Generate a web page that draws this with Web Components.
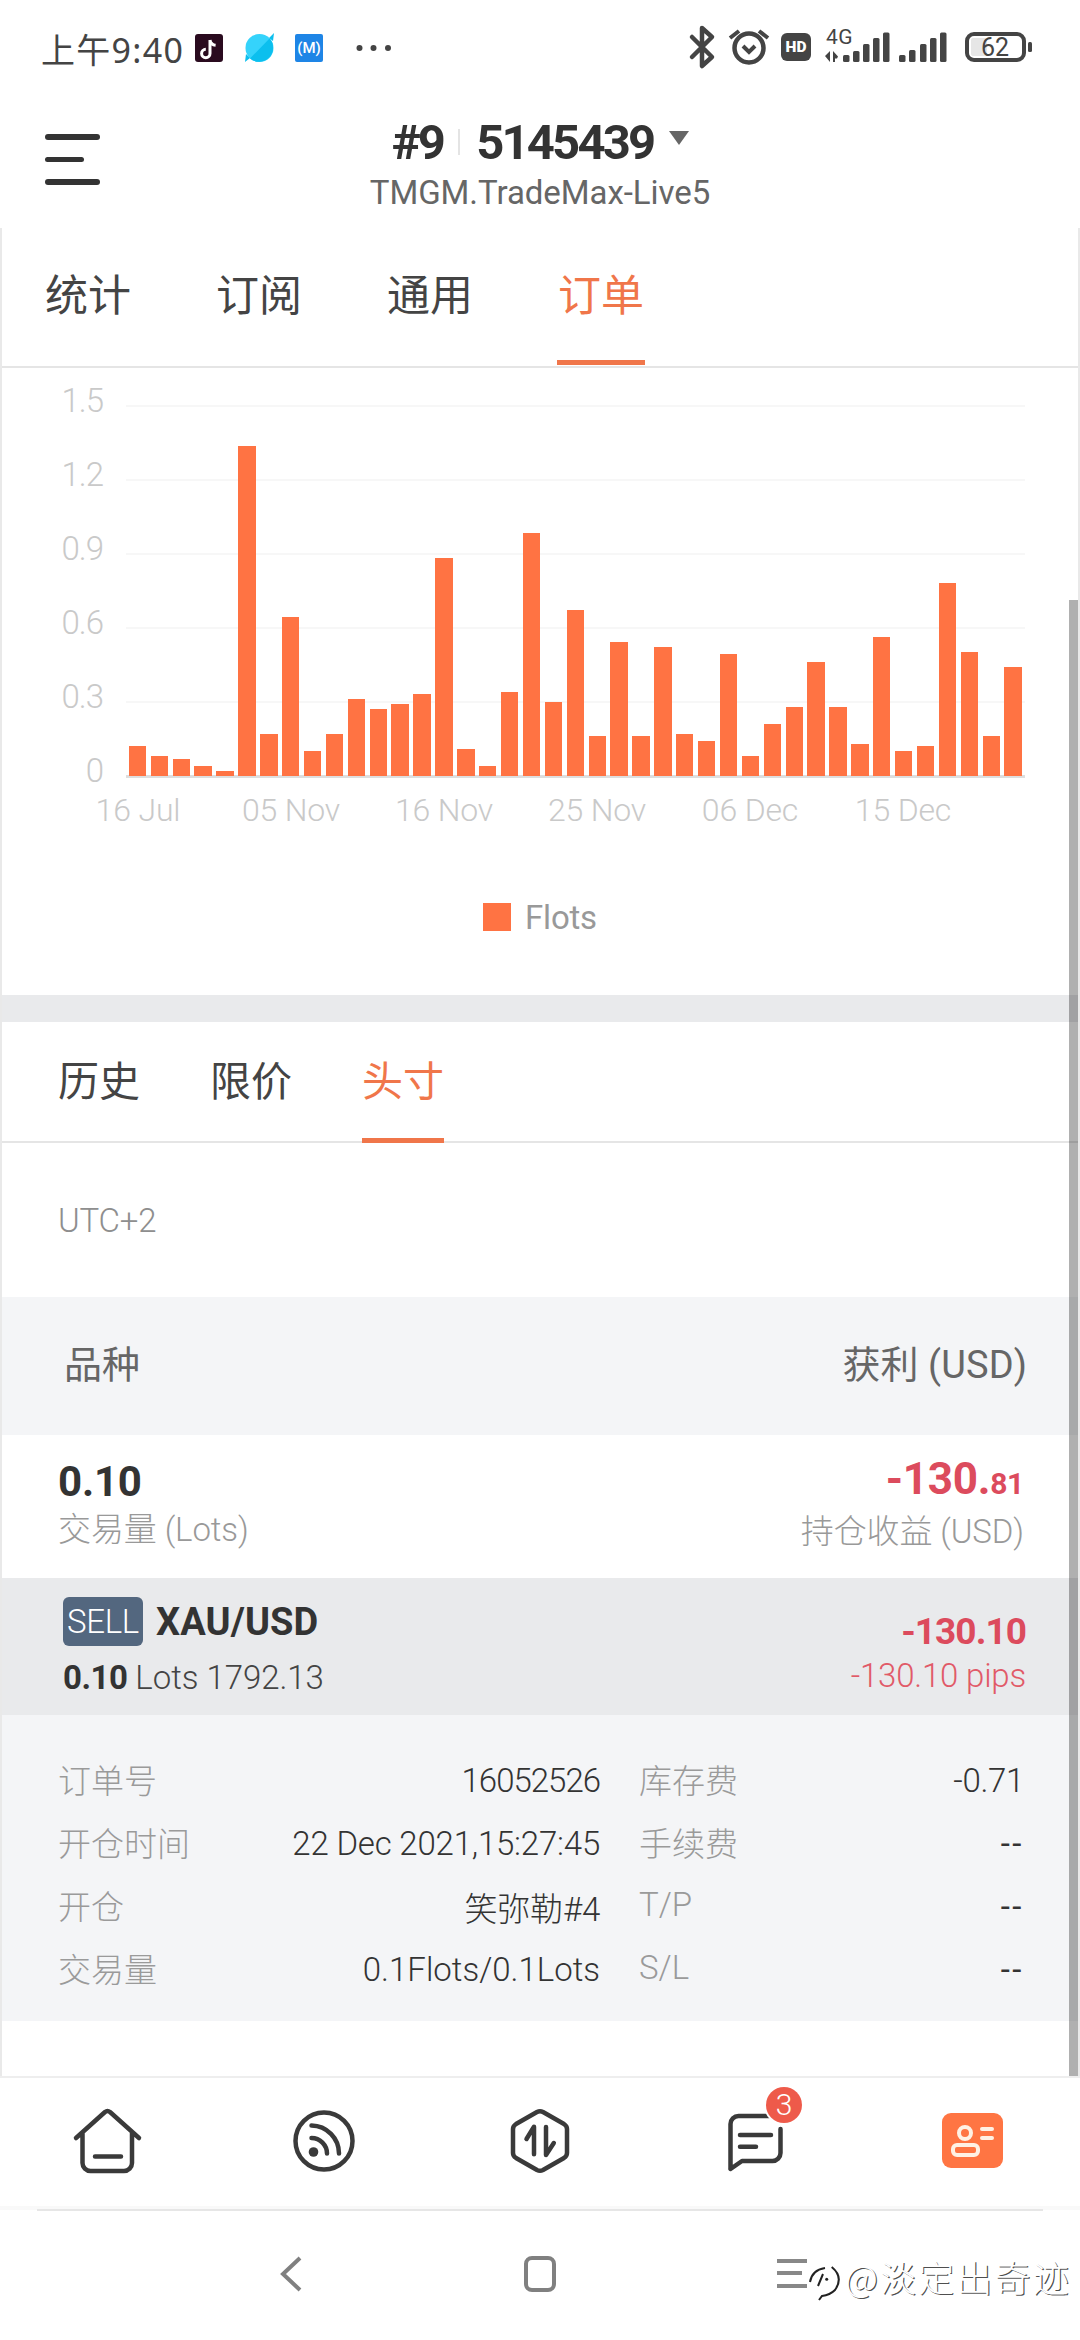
<!DOCTYPE html>
<html lang="zh"><head><meta charset="utf-8"><title>Orders</title>
<style>
html,body{margin:0;padding:0;background:#fff}
body{width:1080px;height:2340px;overflow:hidden;font-family:Roboto,"Noto Sans CJK SC",sans-serif;display:flex;flex-direction:column}
</style></head>
<body>
<status-bar></status-bar>
<app-header></app-header>
<main-panel>
  <tab-bar style="--pt:36px;--fs:43px;--gap:83px;--pl:42px;--pb:40px;--mb:1px;--px:1px">
    <tab-item>统计</tab-item><tab-item>订阅</tab-item><tab-item>通用</tab-item><tab-item active>订单</tab-item>
  </tab-bar>
  <bar-chart data="0.12 .08 .07 .04 .02 1.33 .17 .64 .10 .17 .31 .27 .29 .33 .88 .11 .04 .34 .98 .30 .67 .16 .54 .16 .52 .17 .14 .49 .08 .21 .28 .46 .28 .13 .56 .10 .12 .78 .50 .16 .44"></bar-chart>
  <gray-gap></gray-gap>
  <tab-bar style="--pt:27.500px;--fs:41px;--gap:70px;--pl:56px;--pb:32.500px;--mb:-2px;--px:0px">
    <tab-item>历史</tab-item><tab-item>限价</tab-item><tab-item active>头寸</tab-item>
  </tab-bar>
  <utc-note>UTC+2</utc-note>
  <table-head><span slot="l">品种</span><span slot="r">获利 (USD)</span></table-head>
  <order-summary></order-summary>
  <order-row></order-row>
  <order-details>
    <detail-pair label="订单号" style="--ls:-1px">16052526</detail-pair><detail-pair label="库存费" style="--ls:-.3px">-0.71</detail-pair>
    <detail-pair label="开仓时间">22 Dec 2021,15:27:45</detail-pair><detail-pair label="手续费" style="--ls:2.500px;--vw:400">--</detail-pair>
    <detail-pair label="开仓">笑弥勒#4</detail-pair><detail-pair label="T/P" style="--ls:2.500px;--vw:400">--</detail-pair>
    <detail-pair label="交易量" style="--ls:0px">0.1Flots/0.1Lots</detail-pair><detail-pair label="S/L" style="--ls:2.500px;--vw:400">--</detail-pair>
  </order-details>
</main-panel>
<bottom-nav></bottom-nav>
<system-nav></system-nav>
<script>
function def(name, html, extra){
  customElements.define(name, class extends HTMLElement{
    constructor(){super();this.attachShadow({mode:'open'}).innerHTML=html;}
    connectedCallback(){ if(extra) extra.call(this,this.shadowRoot); }
  });
}
const FONT='font-family:Roboto,"Noto Sans CJK SC",sans-serif;';
def('status-bar',`<style>
:host{display:flex;align-items:center;height:96px;flex:none;padding-left:41px;box-sizing:border-box;${FONT}}
.t{font:400 34px "Noto Sans","Noto Sans CJK SC",sans-serif;color:#444;letter-spacing:1.300px;width:154px;white-space:nowrap}
.l{display:block}.r{display:block;margin-left:auto;margin-right:45px}
</style>
<span class="t">上午9:40</span>
<svg class="l" width="200" height="36" viewBox="195 30 200 36">
  <rect x="195" y="34" width="28" height="28" rx="3" fill="#2a0b1f"/>
  <path d="M210 40v13.5a4.2 4.2 0 1 1-4.2-4.2M210 40c.5 3 2.600 5 5.600 5.300" fill="none" stroke="#fff" stroke-width="3"/>
  <circle cx="259.500" cy="48" r="14" fill="#35d3fb"/>
  <path d="M269 38l5-5-1 8zM250 58l-5 4 1-8zM269.500 38.500A14 14 0 0 1 250 58.500z" fill="#0cbfee"/>
  <rect x="295" y="34" width="28" height="28" rx="2" fill="#1e85e6"/>
  <text x="309" y="53" text-anchor="middle" font-family="Roboto" font-weight="500" font-size="15" fill="#fff">(M)</text>
  <circle cx="359.500" cy="48" r="3" fill="#444"/><circle cx="373.500" cy="48" r="3" fill="#444"/><circle cx="388" cy="48" r="3" fill="#444"/>
</svg>
<svg class="r" width="350" height="46" viewBox="685 26 350 46">
  <path d="M692 38l20 20-10 9V29l10 9-20 20" fill="none" stroke="#444" stroke-width="4.500" stroke-linejoin="round" stroke-linecap="round"/>
  <circle cx="749" cy="49" r="14.500" fill="none" stroke="#444" stroke-width="4.500"/>
  <path d="M743 47l6 6 6-6" fill="none" stroke="#444" stroke-width="4"/>
  <path d="M730 39l9-7M768 39l-9-7" fill="none" stroke="#444" stroke-width="4"/>
  <rect x="781" y="34" width="30" height="28" rx="6" fill="#444"/>
  <text x="796" y="53" text-anchor="middle" font-family="Roboto" font-weight="900" font-size="15.500" fill="#fff">HD</text>
  <text x="826" y="45" font-family="Roboto" font-size="21" fill="#444" letter-spacing=".5">4G</text>
  <path d="M830 52v11l-5-6zM833 63V52l5 5.500-1 2h-2v3.500z" fill="#444"/>
  <g fill="#444">
    <rect x="843" y="56" width="6.500" height="7" rx="1.500"/><rect x="853" y="52" width="6.500" height="11" rx="1.500"/><rect x="863" y="45" width="6.500" height="18" rx="1.500"/><rect x="873" y="39" width="6.500" height="24" rx="1.500"/><rect x="883" y="33.500" width="6.500" height="29.500" rx="1.500"/>
    <rect x="899" y="56" width="6.500" height="7" rx="1.500"/><rect x="909" y="51" width="6.500" height="12" rx="1.500"/><rect x="920" y="45" width="6.500" height="18" rx="1.500"/><rect x="930" y="39" width="6.500" height="24" rx="1.500"/><rect x="940" y="33.500" width="6.500" height="29.500" rx="1.500"/>
  </g>
  <rect x="967" y="35" width="57" height="26" rx="7" fill="none" stroke="#444" stroke-width="4"/>
  <rect x="971" y="39" width="16" height="18" rx="2" fill="#e6e6e6"/>
  <rect x="1028" y="43" width="4" height="10" rx="1.500" fill="#444"/>
  <text x="995" y="57" text-anchor="middle" font-family="Roboto" font-size="25" fill="#444">62</text>
</svg>`);
def('app-header',`<style>
:host{display:grid;grid-template-columns:1fr auto 1fr;height:132px;flex:none;box-sizing:border-box;padding:19px 0 0 0;${FONT}}
.b{margin:19px 0 0 45px;display:flex;flex-direction:column;gap:17px;align-self:start}
.b i{display:block;height:5.500px;width:55px;background:#333;border-radius:3px}
.b i:nth-child(2){width:39px}
.c{display:flex;flex-direction:column;align-items:center}
.a{display:flex;align-items:center;height:54px;font-weight:700;font-size:49px;letter-spacing:-2.800px;color:#333;margin-left:1px}
.s{display:block;width:2px;height:26px;background:#e4e4e4;margin:0 16px 0 15px}
.v{display:block;width:0;height:0;border:10.500px solid transparent;border-top:14px solid #666;border-bottom:0;margin:-8px 0 0 16px}
.n{line-height:47px;font-size:33px;letter-spacing:-.05px;color:#666}
</style>
<div class="b"><i></i><i></i><i></i></div>
<div class="c"><div class="a">#9<span class="s"></span>5145439<span class="v"></span></div><div class="n">TMGM.TradeMax-Live5</div></div>`);
def('main-panel',`<style>
:host{display:block;position:relative;height:1848px;flex:none;box-sizing:border-box;border-left:2px solid #e9e9e9;border-right:2px solid #e9e9e9;overflow:hidden}
.sb{position:absolute;right:-2px;top:372px;bottom:0;width:11px;background:rgba(0,0,0,.31)}
</style><slot></slot><div class="sb"></div>`);
def('tab-bar',`<style>
:host{display:flex;gap:var(--gap);box-sizing:border-box;padding:var(--pt) 0 0 var(--pl);border-bottom:2px solid #e5e5e5;font-size:var(--fs);}
::slotted(tab-item){margin-bottom:var(--mb)}
</style><slot></slot>`);
def('tab-item',`<style>
:host{display:block;line-height:56px;padding:0 var(--px) var(--pb);border-bottom:5px solid transparent;color:#444;font-family:"Noto Sans CJK SC",sans-serif;font-weight:400}
:host([active]){color:#f0764a;border-bottom-color:#f0764a}
</style><slot></slot>`);
def('bar-chart',`<style>
:host{display:block;height:627px;box-sizing:border-box;padding-top:37px;${FONT}color:#c9c9c9;font-weight:300}
.m{display:flex}
.y{width:101px;height:372px;margin-top:-5px;display:flex;flex-direction:column;justify-content:space-between;text-align:right;font-size:33px;letter-spacing:-1px}
.y span{display:block;height:2px;line-height:2px}
.p{position:relative;width:899px;height:373px;margin-left:23px}
.g{height:100%;display:flex;flex-direction:column;justify-content:space-between}
.g i{display:block;height:2px;background:#f7f7f7}
.g i:last-child{height:3px;background:#dedede}
.bars{position:absolute;left:2.800px;right:0;bottom:2px;top:0;display:flex;align-items:flex-end;gap:4.500px}
.bars i{display:block;flex:none;width:17.400px;background:#ff7343}
.x{display:grid;grid-template-columns:repeat(6,153px);margin:12px 0 0 59.500px;line-height:40px;font-size:32px;letter-spacing:-.15px;text-align:center}
.lg{display:flex;justify-content:center;align-items:center;gap:14px;margin-top:67px;height:40px;font-size:33px;letter-spacing:-.2px;color:#999;font-weight:400}
.lg i{display:block;width:28px;height:28px;background:#ff7343}
</style>
<div class="m"><div class="y"><span>1.5</span><span>1.2</span><span>0.9</span><span>0.6</span><span>0.3</span><span>0</span></div>
<div class="p"><div class="g"><i></i><i></i><i></i><i></i><i></i><i></i></div><div class="bars"></div></div></div>
<div class="x"><span>16 Jul</span><span>05 Nov</span><span>16 Nov</span><span>25 Nov</span><span>06 Dec</span><span>15 Dec</span></div>
<div class="lg"><i></i><span>Flots</span></div>`,function(s){
  const box=s.querySelector('.bars');
  if(box.children.length) return;
  this.getAttribute('data').trim().split(/\s+/).forEach(v=>{
    const b=document.createElement('i');b.style.height=(parseFloat(v)*248)+'px';box.appendChild(b);
  });
});
def('gray-gap',`<style>:host{display:block;height:27px;background:#e9eaec}</style>`);
def('utc-note',`<style>:host{display:block;height:154px;box-sizing:border-box;padding:60px 0 0 56px;line-height:36px;font-size:33px;letter-spacing:-.2px;font-weight:300;color:#8e8e8e;${FONT}}</style><slot></slot>`);
def('table-head',`<style>
:host{display:flex;justify-content:space-between;align-items:center;height:138px;box-sizing:border-box;padding:0 51px 10px 62px;background:#f4f5f7;color:#666;font-size:38px;letter-spacing:.1px;${FONT}}
</style><slot name="l"></slot><slot name="r"></slot>`);
def('order-summary',`<style>
:host{display:flex;justify-content:space-between;height:143px;box-sizing:border-box;padding:22.500px 54px 0 56px;${FONT}}
.a{font-weight:700;font-size:42px;line-height:48px;color:#333;letter-spacing:-.2px}
.c{font-size:33px;line-height:44px;color:#999;letter-spacing:-.1px;margin-top:2px;font-weight:300}
.rt{text-align:right}
.red{font-weight:700;font-size:44px;line-height:42px;color:#dc4b5d;letter-spacing:-.3px}
.red small{font-size:30px}
</style>
<div><div class="a">0.10</div><div class="c">交易量 (Lots)</div></div>
<div class="rt"><div class="red">-130.<small>81</small></div><div class="c" style="margin-top:5.500px">持仓收益 (USD)</div></div>`);
def('order-row',`<style>
:host{display:flex;justify-content:space-between;height:137px;box-sizing:border-box;padding:19px 52px 0 61px;background:#e9eaec;${FONT}}
.t{display:flex;align-items:center;height:49px;gap:13px}
.bd{display:block;width:80px;height:49px;line-height:49px;background:#53677f;border-radius:6px;color:#fff;text-align:center;font-size:33px;letter-spacing:-.3px;font-weight:300}
.sy{font-weight:700;font-size:38px;color:#333;letter-spacing:.1px}
.l{margin-top:12px;line-height:40px;font-size:33px;color:#444;letter-spacing:-.05px;font-weight:300}
.l b{font-weight:700;letter-spacing:-.5px;color:#333}
.rt{text-align:right}
.p{font-weight:700;font-size:37px;color:#dc4b5d;line-height:40px;margin-top:15px;letter-spacing:-.95px}
.q{font-size:33px;line-height:40px;margin-top:4px;color:#e15a68;letter-spacing:-.2px;font-weight:300}
</style>
<div><div class="t"><span class="bd">SELL</span><span class="sy">XAU/USD</span></div><div class="l"><b>0.10</b> Lots 1792.13</div></div>
<div class="rt"><div class="p">-130.10</div><div class="q">-130.10 pips</div></div>`);
def('order-details',`<style>
:host{display:grid;grid-template-columns:542px 385px;column-gap:39px;grid-auto-rows:63px;height:306px;box-sizing:border-box;padding:34px 0 0 56px;background:#f4f5f7}
</style><slot></slot>`);
def('detail-pair',`<style>
:host{display:flex;justify-content:space-between;align-items:center;font-size:33px;font-weight:300;${FONT}}
.k{color:#9a9a9a;margin-bottom:4px}
.v{color:#333;letter-spacing:var(--ls,-.2px);font-weight:var(--vw,300)}
</style><span class="k"></span><span class="v"><slot></slot></span>`,function(s){s.querySelector('.k').textContent=this.getAttribute('label');});
const P='fill="none" stroke="#3a3a3a" stroke-width="4.500" stroke-linecap="round" stroke-linejoin="round"';
def('bottom-nav',`<style>
:host{display:grid;grid-template-columns:repeat(5,216px);height:130px;flex:none;box-sizing:border-box;border-top:2px solid #eee;align-items:center;justify-items:center;${FONT}}
.i{position:relative;width:72px;height:72px;margin-top:-2px}
svg{display:block}
.n{position:absolute;left:46px;top:-18px;width:36px;height:36px;border-radius:50%;background:#ee5a4a;color:#fff;font-size:30px;line-height:36px;text-align:center;box-shadow:0 0 0 2px #fff;font-weight:300}
</style>
<div class="i"><svg width="72" height="72" viewBox="0 0 72 72"><path d="M4 33L33 7q2.500-2 5 0L67 33M10.500 28V58a8 8 0 0 0 8 8H52a8 8 0 0 0 8-8V28M23 51.500H49" ${P}/></svg></div>
<div class="i"><svg width="72" height="72" viewBox="0 0 72 72"><circle cx="36" cy="36" r="28.500" ${P}/><circle cx="25.500" cy="47" r="4.800" fill="#3a3a3a"/><path d="M23.500 33A15.500 15.500 0 0 1 39 48.500M23.500 20.500A28 28 0 0 1 51 48.500" ${P}/></svg></div>
<div class="i"><svg width="72" height="72" viewBox="0 0 72 72"><path d="M33 7q3-1.500 6 0L60 19q3 2 3 5V48q0 3-3 5L39 65q-3 1.500-6 0L12 53q-3-2-3-5V24q0-3 3-5ZM30 49.300V21.700L22.500 34M42 22V50L49.800 38" ${P}/></svg></div>
<div class="i"><svg width="72" height="72" viewBox="0 0 72 72"><path d="M10.500 63V19a8 8 0 0 1 8-8H54M60.500 24V48a8 8 0 0 1-8 8H22L10.500 64M20 30H51M20 41.700H36" ${P}/></svg><span class="n">3</span></div>
<div class="i"><svg width="72" height="72" viewBox="0 0 72 72"><rect x="6" y="8" width="61" height="55" rx="9" fill="#ff7543"/><g fill="none" stroke="#fff1e4" stroke-width="4" stroke-linecap="round"><circle cx="29" cy="28" r="6"/><rect x="17" y="40" width="25" height="10" rx="4"/><path d="M46 24H56M46 33H56"/></g></svg></div>`);
def('system-nav',`<style>
:host{display:block;position:relative;height:134px;flex:none;background:linear-gradient(#f9f9f9 0 4px,#fff 4px);${FONT}}
.ln{height:2px;margin:0 37px;position:relative;top:3px;background:#e6e6e6}
.r{display:grid;grid-template-columns:repeat(3,250px);justify-content:center;justify-items:center;padding-top:46px}
svg{display:block}
.bk{margin-left:2px}.mn{margin-left:5px}
.w{position:absolute;left:810px;top:46px;display:flex;align-items:center;gap:3px;height:48px;color:#fff;font:300 36px "Noto Sans CJK SC",sans-serif;letter-spacing:2.200px;text-shadow:1.200px 1.200px 0 rgba(0,0,0,.7);white-space:nowrap}
.w svg{overflow:visible}
</style>
<div class="ln"></div>
<div class="r">
<svg class="bk" width="36" height="40" viewBox="0 0 36 40"><path d="M27 4L10 20l17 16" fill="none" stroke="#808080" stroke-width="4"/></svg>
<svg width="36" height="40" viewBox="0 0 36 40"><rect x="4" y="4" width="28" height="32" rx="6" fill="none" stroke="#808080" stroke-width="4"/></svg>
<svg class="mn" width="36" height="40" viewBox="0 0 36 40"><path d="M2 7H32M2 19H27M2 32H32" fill="none" stroke="#888" stroke-width="4"/></svg>
</div>
<div class="w"><svg width="32" height="48" viewBox="0 0 32 48"><path d="M0 30Q2 18 15 16M8 34L13 22M21.700 15Q34 25 25 38Q20 43 12 44L9 48" fill="none" stroke="#222" stroke-width="2"/><circle cx="16.700" cy="27.300" r="1.500" fill="#222"/></svg><span>@淡定出奇迹</span></div>`);
</script>
</body></html>
